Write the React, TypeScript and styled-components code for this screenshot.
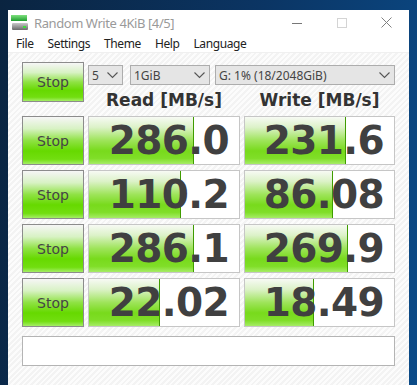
import React from 'react';
import styled, { createGlobalStyle } from 'styled-components';

type Result = { read: string; write: string };

const results: Result[] = [
  { read: '286.0', write: '231.6' },
  { read: '110.2', write: '86.08' },
  { read: '286.1', write: '269.9' },
  { read: '22.02', write: '18.49' },
];

// bar length is log-scaled, like the original tool
const barWidth = (v: string) => {
  const f = (Math.log10(parseFloat(v)) + 1) / 5;
  return `${Math.max(0, Math.min(1, f)) * 100}%`;
};

const GlobalStyle = createGlobalStyle`
  html, body {
    margin: 0;
    padding: 0;
    width: 417px;
    height: 385px;
    overflow: hidden;
  }
  body {
    background: linear-gradient(100deg, #0a2440 0%, #0b3564 55%, #0b4b88 100%);
    font-family: "Noto Sans", "DejaVu Sans", sans-serif;
  }
`;

const Desktop = styled.div`
  padding: 10px 8px;
`;

const Window = styled.div`
  width: 401px;
  height: 365px;
  background: #fff;
  display: flex;
  flex-direction: column;
`;

const TitleBar = styled.div`
  height: 25px;
  display: flex;
  align-items: center;
  padding-left: 3px;
`;

const Title = styled.span`
  font-size: 13px;
  color: #9a9a9a;
  margin-left: 6px;
  flex: 1;
  letter-spacing: -0.42px;
`;

const CaptionButton = styled.div`
  width: 45px;
  height: 25px;
  display: flex;
  align-items: center;
  justify-content: center;
`;

const MenuBar = styled.div`
  height: 18px;
  display: flex;
  align-items: center;
  padding-left: 1px;
  border-bottom: 1px solid #f0f0f0;
`;

const MenuItem = styled.span`
  font-size: 12px;
  color: #222;
  padding: 0 7px;
  letter-spacing: -0.4px;
`;

const Content = styled.div`
  flex: 1;
  padding: 9px 14px 8px;
  background: repeating-linear-gradient(135deg, #fcfcfc 0 2px, #f3f3f3 2px 4px);
  display: grid;
  grid-template-columns: 62px 152px 151px;
  grid-auto-rows: 49px;
  column-gap: 4px;
  row-gap: 5px;
`;

const StopButton = styled.div<{ $short?: boolean }>`
  box-sizing: border-box;
  height: ${(p) => (p.$short ? '40px' : '49px')};
  border: 1px solid #8c8c8c;
  background: linear-gradient(#f6f6f6 0%, #d8f2c4 25%, #8fe244 50%, #66d900 72%, #72de10 90%, #a4ee66 100%);
  display: flex;
  align-items: center;
  justify-content: center;
  font-family: "DejaVu Sans", sans-serif;
  font-size: 14px;
  color: #454545;
`;

const HeadBlock = styled.div`
  grid-column: 2 / 4;
  display: flex;
  flex-direction: column;
`;

const ComboRow = styled.div`
  margin-top: 3px;
  display: flex;
`;

const Combo = styled.div<{ $w: number; $gap: number }>`
  box-sizing: border-box;
  width: ${(p) => p.$w}px;
  margin-right: ${(p) => p.$gap}px;
  height: 20px;
  border: 1px solid #adadad;
  background: #e5e5e5;
  display: flex;
  align-items: center;
  justify-content: space-between;
  padding: 0 4px 0 3px;
  font-size: 12px;
  color: #444;
`;

const HeaderRow = styled.div`
  display: grid;
  grid-template-columns: 152px 151px;
  column-gap: 4px;
  padding-top: 5px;
`;

const Header = styled.div`
  text-align: center;
  font-family: "DejaVu Sans", sans-serif;
  font-weight: bold;
  font-size: 17px;
  color: #333;
`;

const Cell = styled.div`
  position: relative;
  box-sizing: border-box;
  border: 1px solid #c6c6c6;
  background: #fff;
  overflow: hidden;
`;

const Bar = styled.div`
  position: absolute;
  left: 0;
  top: 0;
  bottom: 0;
  border-right: 1px solid #3f9c00;
  background: linear-gradient(#f7faf4 0%, #dcf2c8 22%, #9ee45a 50%, #78da1c 72%, #80de28 88%, #a6ec66 100%);
`;

const Value = styled.div`
  position: relative;
  height: 100%;
  display: flex;
  align-items: center;
  justify-content: flex-end;
  padding-right: 10px;
  font-family: "DejaVu Sans", sans-serif;
  font-weight: bold;
  font-size: 39px;
  color: #404040;
  letter-spacing: -0.6px;
`;

const Comment = styled.div`
  grid-column: 1 / 4;
  height: 30px;
  margin-top: 4px;
  box-sizing: border-box;
  border: 1px solid #b4b4b4;
  background: #fff;
`;

const Chevron = () => (
  <svg width="11" height="7" viewBox="0 0 11 7">
    <path d="M0.5 0.5 L5.5 5.5 L10.5 0.5" fill="none" stroke="#555" strokeWidth="1.1" />
  </svg>
);

const AppIcon = () => (
  <svg width="17" height="16" viewBox="0 0 17 16">
    <defs>
      <linearGradient id="g" x1="0" y1="0" x2="0" y2="1">
        <stop offset="0" stopColor="#7fe07f" />
        <stop offset="1" stopColor="#1f9e2f" />
      </linearGradient>
      <linearGradient id="d" x1="0" y1="0" x2="0" y2="1">
        <stop offset="0" stopColor="#c8c8c8" />
        <stop offset="1" stopColor="#6a6a6a" />
      </linearGradient>
    </defs>
    <rect x="0" y="0" width="16" height="6" fill="url(#g)" />
    <rect x="1" y="8" width="16" height="7" rx="1" fill="url(#d)" />
    <rect x="12" y="11" width="3" height="2" fill="#3ddc3d" />
  </svg>
);

const App: React.FC = () => {
  return (
    <>
      <GlobalStyle />
      <Desktop>
        <Window>
          <TitleBar>
            <AppIcon />
            <Title>Random Write 4KiB [4/5]</Title>
            <CaptionButton>
              <svg width="10" height="10" viewBox="0 0 10 10">
                <path d="M0 5.5 H10" stroke="#777" strokeWidth="1" />
              </svg>
            </CaptionButton>
            <CaptionButton>
              <svg width="10" height="10" viewBox="0 0 10 10">
                <rect x="0.5" y="0.5" width="9" height="9" fill="none" stroke="#d4d4d4" />
              </svg>
            </CaptionButton>
            <CaptionButton>
              <svg width="11" height="11" viewBox="0 0 11 11">
                <path d="M0.5 0.5 L10.5 10.5 M10.5 0.5 L0.5 10.5" stroke="#808080" strokeWidth="1" />
              </svg>
            </CaptionButton>
          </TitleBar>
          <MenuBar>
            <MenuItem>File</MenuItem>
            <MenuItem>Settings</MenuItem>
            <MenuItem>Theme</MenuItem>
            <MenuItem>Help</MenuItem>
            <MenuItem>Language</MenuItem>
          </MenuBar>
          <Content>
            <StopButton $short>Stop</StopButton>
            <HeadBlock>
              <ComboRow>
                <Combo $w={35} $gap={7}>
                  5<Chevron />
                </Combo>
                <Combo $w={80} $gap={5}>
                  1GiB<Chevron />
                </Combo>
                <Combo $w={180} $gap={0}>
                  G: 1% (18/2048GiB)<Chevron />
                </Combo>
              </ComboRow>
              <HeaderRow>
                <Header>Read [MB/s]</Header>
                <Header>Write [MB/s]</Header>
              </HeaderRow>
            </HeadBlock>
            {results.map((r, i) => (
              <React.Fragment key={i}>
                <StopButton>Stop</StopButton>
                <Cell>
                  <Bar style={{ width: barWidth(r.read) }} />
                  <Value>{r.read}</Value>
                </Cell>
                <Cell>
                  <Bar style={{ width: barWidth(r.write) }} />
                  <Value>{r.write}</Value>
                </Cell>
              </React.Fragment>
            ))}
            <Comment />
          </Content>
        </Window>
      </Desktop>
    </>
  );
};

export default App;
